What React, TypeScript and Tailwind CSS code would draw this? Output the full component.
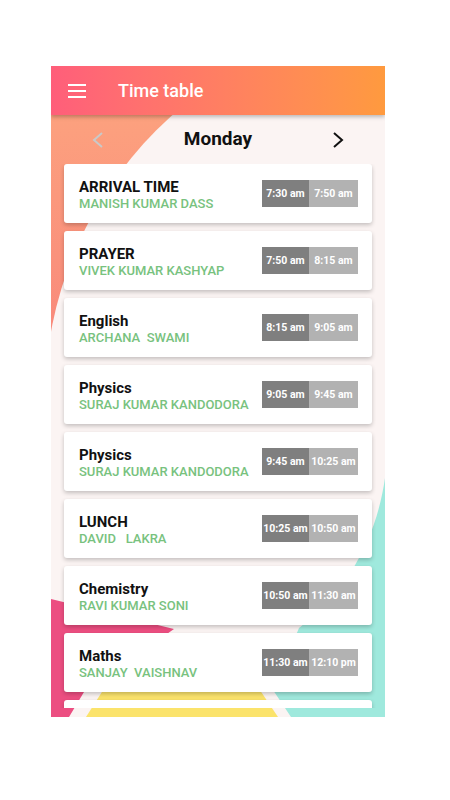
import type React from "react";

type Period = {
	subject: string;
	teacher: string;
	from: string;
	to: string;
};

const periods: Period[] = [
	{ subject: "ARRIVAL TIME", teacher: "MANISH KUMAR DASS", from: "7:30 am", to: "7:50 am" },
	{ subject: "PRAYER", teacher: "VIVEK KUMAR KASHYAP", from: "7:50 am", to: "8:15 am" },
	{ subject: "English", teacher: "ARCHANA  SWAMI", from: "8:15 am", to: "9:05 am" },
	{ subject: "Physics", teacher: "SURAJ KUMAR KANDODORA", from: "9:05 am", to: "9:45 am" },
	{ subject: "Physics", teacher: "SURAJ KUMAR KANDODORA", from: "9:45 am", to: "10:25 am" },
	{ subject: "LUNCH", teacher: "DAVID   LAKRA", from: "10:25 am", to: "10:50 am" },
	{ subject: "Chemistry", teacher: "RAVI KUMAR SONI", from: "10:50 am", to: "11:30 am" },
	{ subject: "Maths", teacher: "SANJAY  VAISHNAV", from: "11:30 am", to: "12:10 pm" },
];

// decorative blobs behind the list
const Backdrop: React.FC = () => (
	<svg
		className="absolute inset-0"
		width={334}
		height={651}
		viewBox="0 0 334 651"
	>
		<defs>
			<linearGradient id="og" x1="0" y1="0" x2="0" y2="1">
				<stop offset="0" stopColor="#FDA67F" />
				<stop offset="1" stopColor="#F8847A" />
			</linearGradient>
		</defs>
		<rect width="334" height="651" fill="#FBF4F3" />
		<rect width="334" height="320" fill="url(#og)" />
		<circle cx="374" cy="333" r="380" fill="#FBF4F3" />
		<path
			d="M334 412 C326 468 300 522 248 562 L222 624 L240 651 L334 651 Z"
			fill="#9FE9DD"
		/>
		<path d="M0 533 L123 563 L33 626 L18 651 L0 651 Z" fill="#EC4E81" />
		<path d="M70 596 L190 596 L227 651 L35 651 Z" fill="#FBE36B" />
	</svg>
);

const Chevron: React.FC<{ left?: boolean; color: string }> = ({ left, color }) => (
	<svg width="12" height="16" viewBox="0 0 12 16" fill="none">
		<path
			d={left ? "M10 1 L2 8 L10 15" : "M2 1 L10 8 L2 15"}
			stroke={color}
			strokeWidth="2"
		/>
	</svg>
);

const PeriodCard: React.FC<{ p: Period }> = ({ p }) => (
	<div className="flex h-[59px] shrink-0 items-center justify-between rounded-[3px] bg-white pr-[14px] pl-[15px] shadow-[0_2px_4px_rgba(0,0,0,0.22)]">
		<div className="flex flex-col pt-[3px]">
			<span className="font-bold text-[15px] text-[#111111] leading-[17px]">
				{p.subject}
			</span>
			<span className="whitespace-pre font-medium text-[13px] text-[#78C27E] leading-[16px]">
				{p.teacher}
			</span>
		</div>
		<div className="flex h-[27px] font-bold text-[10.5px] text-white">
			<div className="flex w-[47px] items-center justify-center bg-[#7F7F7F]">
				{p.from}
			</div>
			<div className="flex w-[49px] items-center justify-center bg-[#B2B2B2]">
				{p.to}
			</div>
		</div>
	</div>
);

export default function App() {
	return (
		<div
			className="h-[800px] w-[450px] bg-white pt-[66px] pl-[51px]"
			style={{ fontFamily: "Roboto, 'Noto Sans', sans-serif" }}
		>
			<div className="relative flex h-[651px] w-[334px] flex-col overflow-hidden">
				<Backdrop />

				{/* Header */}
				<div className="relative z-20 flex h-[49px] shrink-0 items-center bg-linear-to-r from-[#FF5E7A] to-[#FF9A3E] pl-[17px] shadow-[0_2px_4px_rgba(0,0,0,0.25)]">
					<div className="flex w-[18px] flex-col gap-[4px]">
						<span className="h-[2px] bg-white" />
						<span className="h-[2px] bg-white" />
						<span className="h-[2px] bg-white" />
					</div>
					<span className="ml-[32px] font-medium text-[18px] text-white">
						Time table
					</span>
				</div>

				{/* Day switcher */}
				<div className="relative z-10 flex h-[49px] shrink-0 items-center justify-between px-[41px]">
					<Chevron left color="#C9C9C9" />
					<span className="font-bold text-[19px] text-[#111111]">Monday</span>
					<Chevron color="#111111" />
				</div>

				{/* Periods */}
				<div className="relative z-10 flex h-[544px] flex-col gap-[8px] overflow-hidden px-[13px]">
					{periods.map((p, i) => (
						<PeriodCard key={i} p={p} />
					))}
					{/* next period, scrolled out of view */}
					<div className="h-[59px] shrink-0 rounded-[3px] bg-white shadow-[0_2px_4px_rgba(0,0,0,0.22)]" />
				</div>
			</div>
		</div>
	);
}
